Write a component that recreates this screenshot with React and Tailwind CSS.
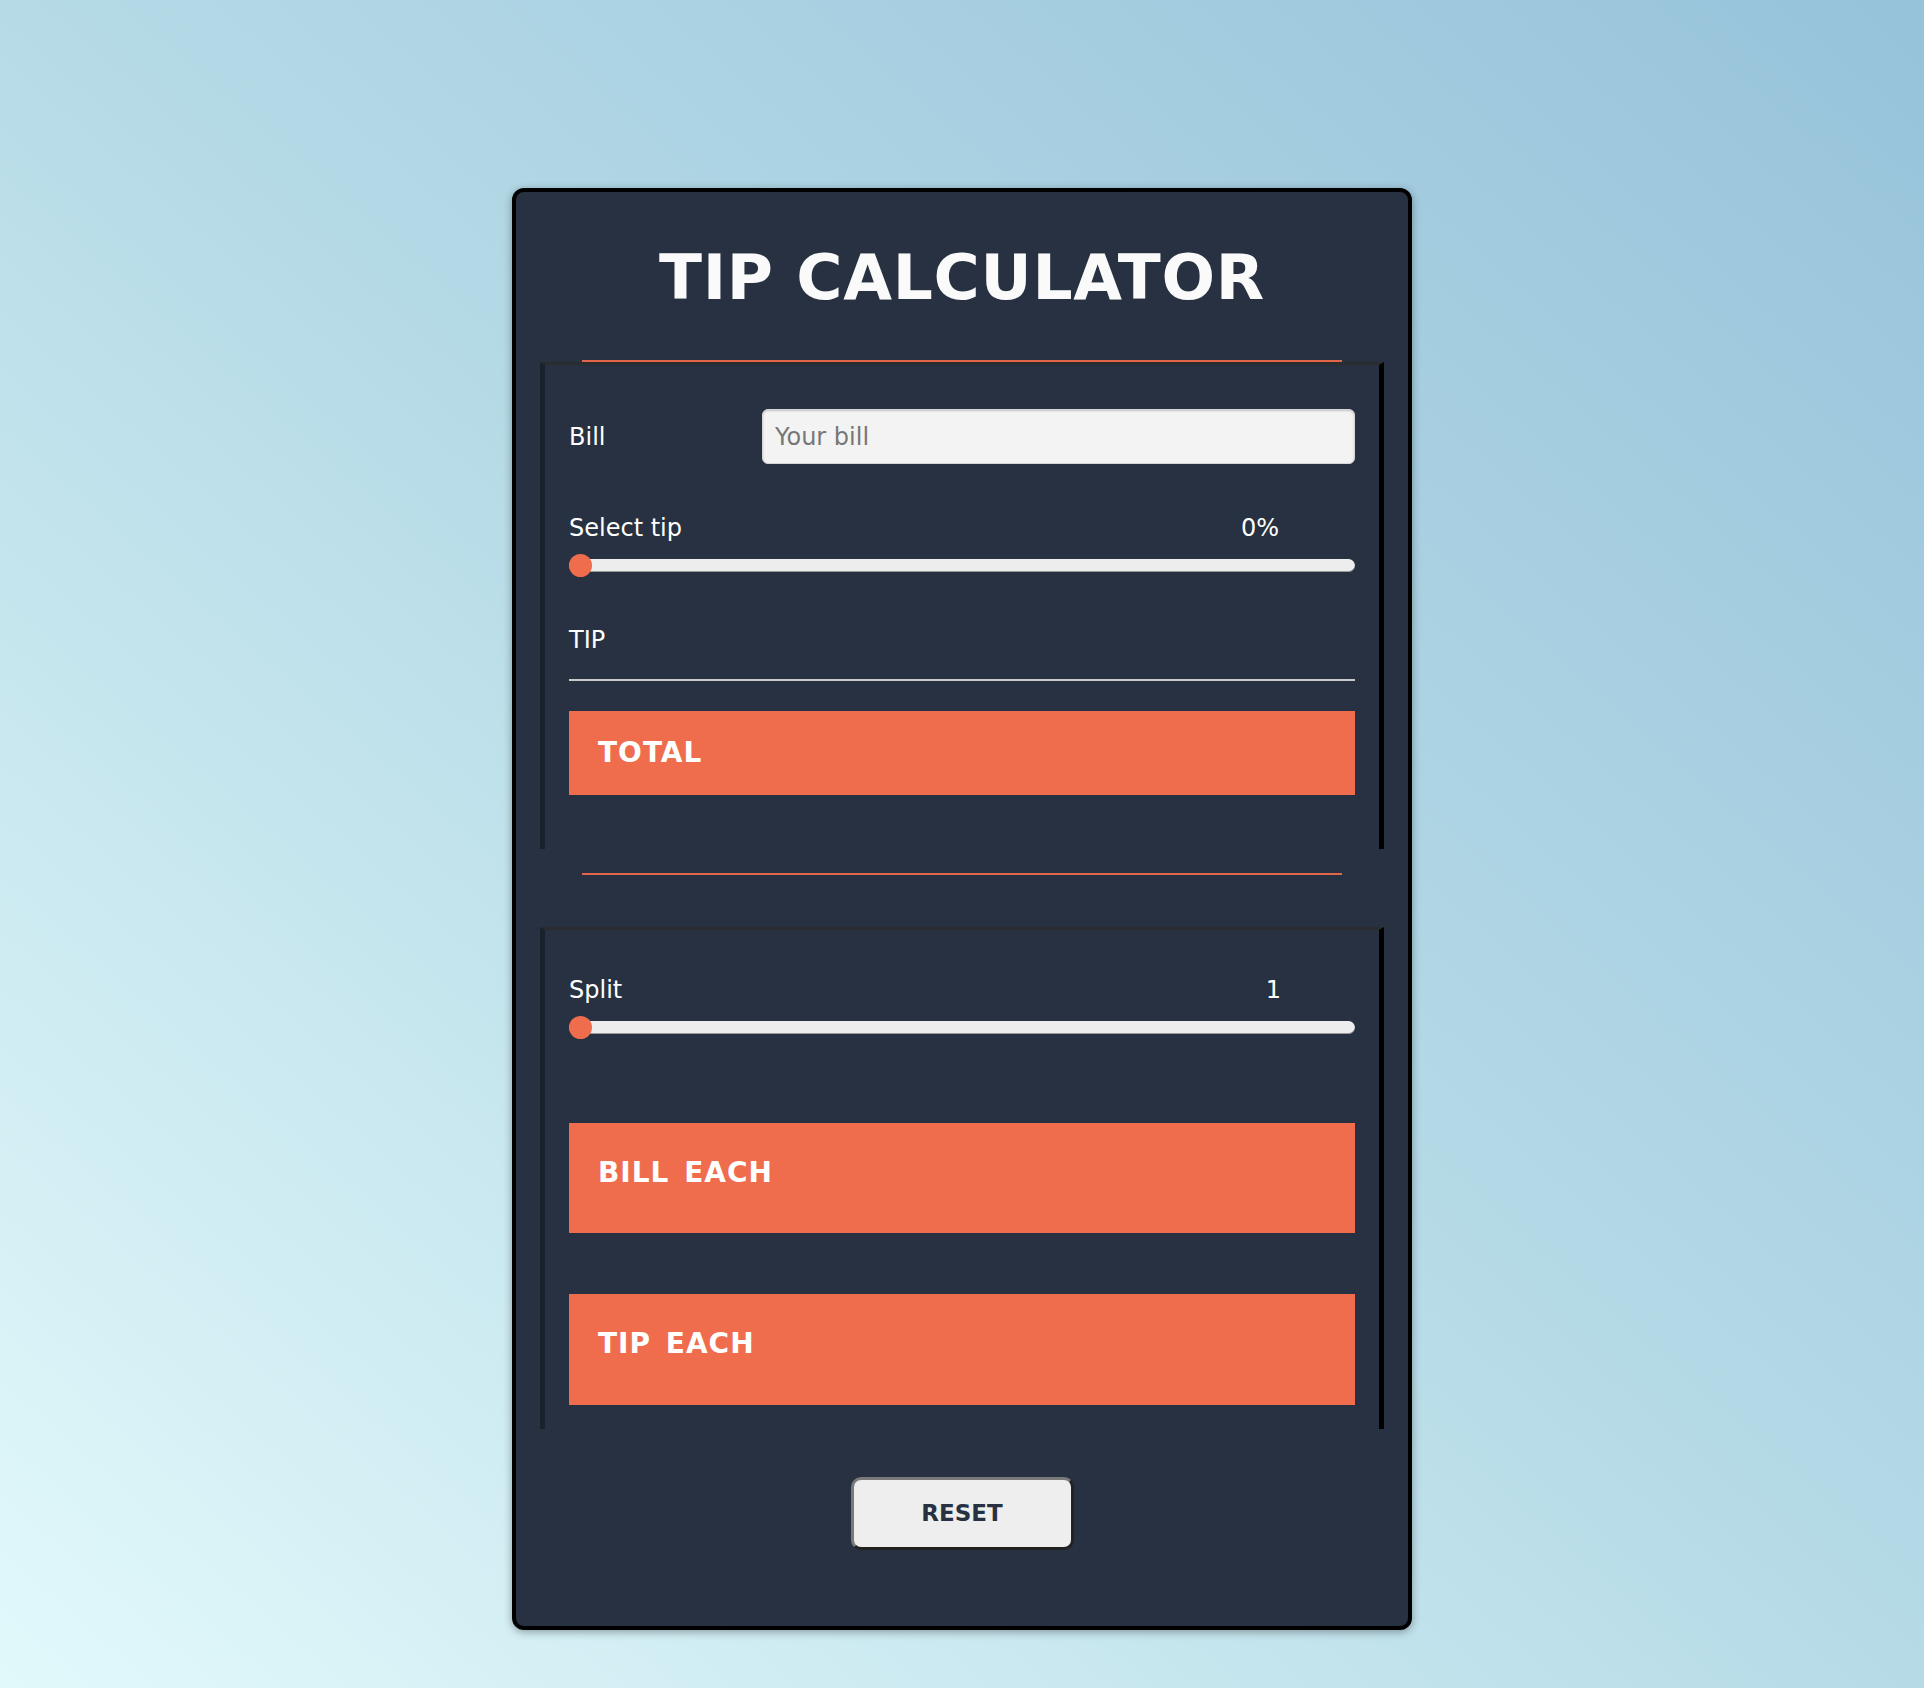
import React from 'react';

const font = { fontFamily: '"DejaVu Sans", "Liberation Sans", sans-serif' };

// Static slider: track with the thumb resting at the left end
const Slider = () => (
  <div className="relative mt-[14px] flex h-[23px] items-center">
    <div className="h-[13px] w-full rounded-full bg-[#ededed] shadow-[inset_0_-1px_0_rgba(0,0,0,0.35)]"></div>
    <div className="absolute left-0 top-0 h-[23px] w-[23px] rounded-full bg-[#ef6c4d]"></div>
  </div>
);

const Section = ({ className, children }) => (
  <div
    className={`border-t-[3px] border-l-[5px] border-r-[5px] border-t-[#2b2c2f] border-l-[#19212c] border-r-black px-6 ${className}`}
  >
    {children}
  </div>
);

const ResultBox = ({ label, className }) => (
  <div className={`w-full bg-[#ef6c4d] pl-[29px] text-[28px] font-bold leading-none tracking-[1px] [word-spacing:4px] text-white ${className}`}>
    {label}
  </div>
);

export default function App() {
  return (
    <div
      className="flex min-h-[1688px] w-full justify-center bg-gradient-to-tr from-[#e2f9fb] via-[#b6dbe7] to-[#96c2da]"
      style={font}
    >
      <div className="mt-[188px] mb-[58px] w-[900px] rounded-[12px] border-4 border-black bg-[#283141] px-6 shadow-[0_2px_8px_rgba(0,0,0,0.35)]">
        <h1 className="mt-[54px] text-center text-[63px] font-bold leading-none tracking-[0.7px] text-[#fafafa]">
          TIP CALCULATOR
        </h1>

        <div className="mx-auto mt-[51px] h-[2px] w-[90%] bg-[#e4664a]"></div>
        <Section className="pt-[44px] pb-[54px]">
          <div className="flex items-center">
            <label className="w-[193px] shrink-0 text-[24px] leading-none text-white">Bill</label>
            <input
              type="text"
              placeholder="Your bill"
              className="h-[55px] flex-1 rounded-[6px] border border-[#d6d6d6] bg-[#f3f3f3] px-3 text-[24px] text-[#333] shadow-[inset_0_1px_2px_rgba(0,0,0,0.2)] outline-none placeholder:text-[#777]"
              style={font}
            />
          </div>

          <div className="mt-[52px] flex justify-between pr-[76px] text-[24px] leading-none text-white">
            <span>Select tip</span>
            <span>0%</span>
          </div>
          <Slider />

          <div className="mt-[51px] border-b-2 border-[#c9c9c9] pb-[27px] text-[24px] leading-none text-white">
            TIP
          </div>

          <ResultBox label="TOTAL" className="mt-[30px] flex h-[84px] items-center" />
        </Section>

        <div className="mx-auto mt-[24px] h-[2px] w-[90%] bg-[#e4664a]"></div>
        <Section className="mt-[52px] pt-[48px] pb-[24px]">
          <div className="flex justify-between pr-[74px] text-[24px] leading-none text-white">
            <span>Split</span>
            <span>1</span>
          </div>
          <Slider />

          <ResultBox label="BILL EACH" className="mt-[84px] h-[110px] pt-[36px]" />
          <ResultBox label="TIP EACH" className="mt-[61px] h-[111px] pt-[36px]" />
        </Section>

        <div className="mt-[48px] mb-[76px] flex justify-center">
          <button className="h-[73px] w-[223px] rounded-[10px] border-[3px] border-t-[#7a7a7a] border-l-[#7a7a7a] border-r-[#222] border-b-[#222] bg-[#eeeeee] text-[23px] font-bold text-[#283141]">
            RESET
          </button>
        </div>
      </div>
    </div>
  );
}
